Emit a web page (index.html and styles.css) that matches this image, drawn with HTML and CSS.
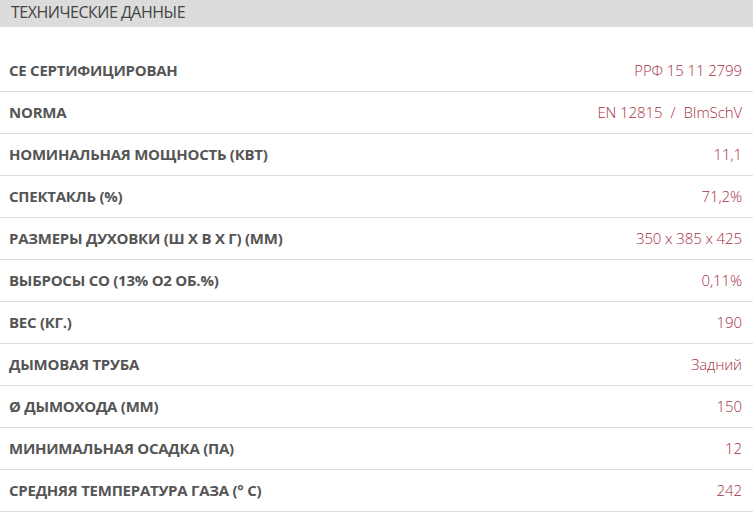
FILE: index.html
```html
<!DOCTYPE html>
<html lang="ru">
<head>
<meta charset="utf-8">
<link rel="stylesheet" href="styles.css">
</head>
<body>
<div class="specs">
  <div class="specs-head">ТЕХНИЧЕСКИЕ ДАННЫЕ</div>
  <div class="specs-table">
    <div class="row"><span class="label">CE СЕРТИФИЦИРОВАН</span><span class="value">РРФ 15 11 2799</span></div>
    <div class="row"><span class="label">NORMA</span><span class="value">EN 12815<span class="sep">/</span>BImSchV</span></div>
    <div class="row"><span class="label">НОМИНАЛЬНАЯ МОЩНОСТЬ (КВТ)</span><span class="value">11,1</span></div>
    <div class="row"><span class="label">СПЕКТАКЛЬ (%)</span><span class="value">71,2%</span></div>
    <div class="row"><span class="label">РАЗМЕРЫ ДУХОВКИ (Ш X В X Г) (ММ)</span><span class="value">350 x 385 x 425</span></div>
    <div class="row"><span class="label">ВЫБРОСЫ CO (13% O2 ОБ.%)</span><span class="value">0,11%</span></div>
    <div class="row"><span class="label">ВЕС (КГ.)</span><span class="value">190</span></div>
    <div class="row"><span class="label">ДЫМОВАЯ ТРУБА</span><span class="value">Задний</span></div>
    <div class="row"><span class="label">Ø ДЫМОХОДА (ММ)</span><span class="value">150</span></div>
    <div class="row"><span class="label">МИНИМАЛЬНАЯ ОСАДКА (ПА)</span><span class="value">12</span></div>
    <div class="row"><span class="label">СРЕДНЯЯ ТЕМПЕРАТУРА ГАЗА (° C)</span><span class="value">242</span></div>
  </div>
</div>
</body>
</html>
```
FILE: styles.css
```css
html, body {
  margin: 0;
  padding: 0;
  background: #fff;
}
body {
  font-family: "Open Sans", "Noto Sans", sans-serif;
  color: #555;
}
.specs {
  width: 753px;
}
.specs-head {
  background: #dcdcdc;
  height: 27px;
  line-height: 25px;
  padding-left: 11px;
  font-size: 16px;
  color: #444;
  letter-spacing: -0.5px;
}
.specs-table {
  padding-top: 23px;
}
.row {
  display: flex;
  justify-content: space-between;
  align-items: center;
  height: 39px;
  padding: 0 11px 2px 9px;
  border-bottom: 1px solid #dedede;
}
.label {
  font-weight: 700;
  font-size: 15px;
  color: #555;
  letter-spacing: -0.25px;
}
.value {
  font-weight: 300;
  font-size: 15px;
  color: #a8303f;
  letter-spacing: -0.1px;
}
.sep {
  margin: 0 8px;
}
```
